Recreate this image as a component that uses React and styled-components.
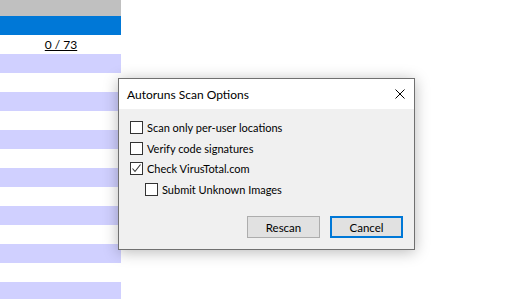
import React from 'react';
import styled, { createGlobalStyle } from 'styled-components';

const GlobalStyle = createGlobalStyle`
	body {
		margin: 0;
		background: #fff;
		font-family: 'Segoe UI', Lato, 'Liberation Sans', Arial, sans-serif;
		font-size: 11px;
	}
`;

const rows = Array.from({ length: 14 }, (_, i) => (i % 2 === 1 ? 'lav' : 'white'));

const options = [
	{ label: 'Scan only per-user locations', checked: false },
	{ label: 'Verify code signatures', checked: false },
	{ label: 'Check VirusTotal.com', checked: true },
	{ label: 'Submit Unknown Images', checked: false, indent: true },
];

const App = () => {
	return (
		<Page>
			<GlobalStyle />
			<List>
				<HeaderRow />
				<SelectedRow />
				{rows.map((kind, i) => (
					<Row key={i} $lav={kind === 'lav'}>
						{i === 0 && <Link>0 / 73</Link>}
					</Row>
				))}
			</List>
			<Dialog>
				<TitleBar>
					<Title>Autoruns Scan Options</Title>
					<CloseBtn type='button'>
						<svg width='10' height='10' viewBox='0 0 10 10'>
							<path d='M0.5 0.5 L9.5 9.5 M9.5 0.5 L0.5 9.5' stroke='#000' strokeWidth='1' />
						</svg>
					</CloseBtn>
				</TitleBar>
				<Body>
					<Options>
						{options.map((opt, i) => (
							<Option key={i} $indent={opt.indent}>
								<Box>
									{opt.checked && (
										<svg width='11' height='11' viewBox='0 0 11 11'>
											<path d='M1.5 5.5 L4 8.5 L9.5 1.5' fill='none' stroke='#333' strokeWidth='1.1' />
										</svg>
									)}
								</Box>
								{opt.label}
							</Option>
						))}
					</Options>
					<Buttons>
						<Button type='button'>Rescan</Button>
						<Button type='button' $default>Cancel</Button>
					</Buttons>
				</Body>
			</Dialog>
		</Page>
	);
};

const Page = styled.div`
	position: relative;
	width: 508px;
	height: 299px;
	overflow: hidden;
	background: #fff;
`;

const List = styled.div`
	width: 121px;
	display: flex;
	flex-direction: column;
`;

const HeaderRow = styled.div`
	height: 16px;
	background: #c0c0c0;
`;

const SelectedRow = styled.div`
	height: 19px;
	background: #0078d7;
`;

const Row = styled.div`
	height: 19px;
	flex-shrink: 0;
	background: ${(p) => (p.$lav ? '#d0d0ff' : '#fff')};
	display: flex;
	align-items: center;
	justify-content: center;
	font-size: 12px;
`;

const Link = styled.span`
	color: #000;
	text-decoration: underline;
	padding-left: 1px;
`;

const Dialog = styled.div`
	position: absolute;
	left: 118px;
	top: 78px;
	width: 295px;
	height: 170px;
	border: 1px solid #707070;
	background: #f0f0f0;
	box-shadow: 0 2px 14px rgba(0, 0, 0, 0.28);
	display: flex;
	flex-direction: column;
`;

const TitleBar = styled.div`
	height: 30px;
	background: #fff;
	display: flex;
	align-items: center;
	justify-content: space-between;
	padding: 0 9px 0 8px;
`;

const Title = styled.div`
	font-size: 12px;
	color: #000;
`;

const CloseBtn = styled.button`
	border: none;
	background: transparent;
	padding: 0;
	width: 10px;
	height: 10px;
	display: flex;
`;

const Body = styled.div`
	flex: 1;
	display: flex;
	flex-direction: column;
	justify-content: space-between;
	padding: 12px 11px 11px 11px;
`;

const Options = styled.div`
	display: flex;
	flex-direction: column;
	gap: 7.5px;
`;

const Option = styled.label`
	display: flex;
	align-items: center;
	gap: 4px;
	height: 13px;
	color: #000;
	padding-left: ${(p) => (p.$indent ? '15px' : '0')};
`;

const Box = styled.span`
	width: 11px;
	height: 11px;
	border: 1px solid #333;
	background: #fff;
	display: flex;
	align-items: center;
	justify-content: center;
`;

const Buttons = styled.div`
	display: flex;
	justify-content: flex-end;
	gap: 10px;
`;

const Button = styled.button`
	width: 73px;
	height: 22px;
	font-family: inherit;
	font-size: 11.5px;
	color: #000;
	background: #e1e1e1;
	border: ${(p) => (p.$default ? '2px solid #0078d7' : '1px solid #adadad')};
	padding: 0;
`;

export default App;
